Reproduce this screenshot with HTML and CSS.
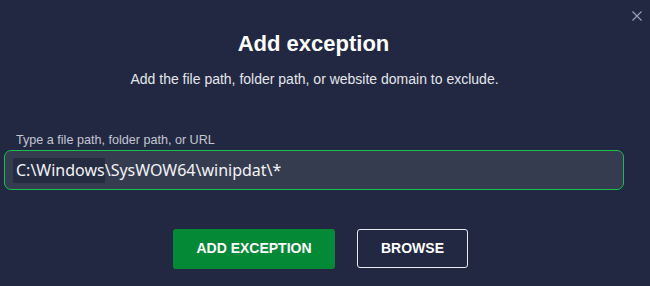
FILE: index.html
```html
<!DOCTYPE html>
<html>
<head>
    <title>Add exception</title>
    <link rel="stylesheet" href="styles.css">
</head>
<body>
    <div class="dialog">
        <button class="closeBtn" aria-label="Close">
            <svg width="10" height="10" viewBox="0 0 10 10">
                <path d="M0.5 0.5 L9.5 9.5 M9.5 0.5 L0.5 9.5" stroke="#9ea4b6" stroke-width="1.1" fill="none"/>
            </svg>
        </button>
        <h1 class="title">Add exception</h1>
        <p class="subtitle">Add the file path, folder path, or website domain to exclude.</p>

        <label class="label">Type a file path, folder path, or URL</label>
        <div class="inputBox"><span class="sel">C:\Windows</span>\SysWOW64\winipdat\*</div>

        <div class="actions">
            <button class="btnAdd">ADD EXCEPTION</button>
            <button class="btnBrowse">BROWSE</button>
        </div>
    </div>
</body>
</html>
```
FILE: styles.css
```css
html, body {
    margin: 0;
    padding: 0;
    background-color: #222841;
}

.dialog {
    width: 650px;
    height: 286px;
    position: relative;
    font-family: "Liberation Sans", Arial, sans-serif;
    color: #ffffff;
    padding-top: 32px;
    box-sizing: border-box;
}

.closeBtn {
    position: absolute;
    top: 11px;
    left: 632px;
    background: none;
    border: none;
    padding: 0;
    width: 10px;
    height: 10px;
    line-height: 0;
}

.title {
    margin: 0;
    padding-right: 23px;
    text-align: center;
    font-size: 22px;
    font-weight: 700;
    line-height: 24px;
}

.subtitle {
    margin: 15px 0 0 0;
    padding-right: 21px;
    text-align: center;
    font-size: 14px;
    line-height: 16px;
    color: #e4e6ec;
}

.label {
    display: block;
    margin: 46px 0 0 16px;
    font-size: 12.6px;
    line-height: 14px;
    color: #c3c7d2;
}

.inputBox {
    margin: 3px 0 0 4px;
    width: 620px;
    height: 40px;
    box-sizing: border-box;
    border: 1px solid #16c04a;
    border-radius: 7px;
    background-color: #363c50;
    padding: 8px 0 0 8px;
    font-family: "Noto Sans", "Open Sans", sans-serif;
    font-size: 16px;
    line-height: 23px;
    color: #f2f3f6;
    white-space: nowrap;
}

.sel {
    background-color: #252b41;
    padding: 1px 0 2px 3px;
}

.actions {
    display: flex;
    align-items: flex-start;
    justify-content: center;
    gap: 22px;
    margin-top: 39px;
    padding-right: 9px;
}

.btnAdd, .btnBrowse {
    font-family: "Liberation Sans", Arial, sans-serif;
    font-weight: 700;
    font-size: 14px;
    color: #ffffff;
    border-radius: 3px;
    padding: 0 0 2px 0;
}

.btnAdd {
    width: 162px;
    height: 40px;
    background-color: #048a36;
    border: none;
}

.btnBrowse {
    width: 111px;
    height: 39px;
    background-color: transparent;
    border: 1px solid #e8eaf0;
}
```
